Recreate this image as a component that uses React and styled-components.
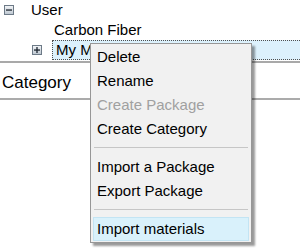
import React from 'react';
import styled, { createGlobalStyle } from 'styled-components';

const Global = createGlobalStyle`
html, body {
    margin: 0;
    padding: 0;
    background: #ffffff;
}
body {
    font-family: "Liberation Sans", Arial, sans-serif;
    color: #000;
}
`

//Screen
const Screen = styled.div`
position: relative;
width: 300px;
height: 250px;
overflow: hidden;
background: #ffffff;
`

//Tree
const Tree = styled.div`
display: flex;
flex-direction: column;
`

const Row = styled.div`
display: flex;
align-items: center;
height: 20px;
padding-left: ${props => props.indent}px;
font-size: 15px;
`

const Toggle = styled.svg`
flex: none;
width: 10px;
height: 10px;
margin-right: ${props => props.gap}px;
`

const Spacer = styled.div`
flex: none;
width: 10px;
margin-right: ${props => props.gap}px;
`

const Label = styled.div`
height: 18px;
line-height: 18px;
padding: 0 3px;
white-space: nowrap;
border: 1px solid transparent;
${props => props.selected && `
    flex: 1;
    margin-right: -6px;
    background: #dcf1fc;
    border: 1px dotted #505050;
`}
`

//Splitter
const Splitter = styled.div`
height: 1px;
border-top: 2px solid #a9a9a9;
margin-top: 1px;
`

//Category header
const Section = styled.div`
display: flex;
align-items: center;
height: 31px;
padding: 3px 2px 0;
font-size: 17px;
border-bottom: 2px solid #ababab;
`

//Context menu
const Menu = styled.div`
position: absolute;
left: 90px;
top: 43px;
width: 160px;
padding: 1px 0 1px;
background: #f1f1f1;
border: 1px solid #979797;
box-shadow: 3px 3px 2px rgba(0, 0, 0, 0.4);
`

const Item = styled.div`
height: 22px;
line-height: 22px;
margin: 0 2px;
padding: 0 3px;
font-size: 15px;
white-space: nowrap;
color: ${props => props.disabled ? '#a0a0a0' : '#000'};
border: 1px solid ${props => props.active ? '#c3e4f3' : 'transparent'};
background: ${props => props.active ? '#d9f1fb' : 'transparent'};
`

const Separator = styled.div`
height: 1px;
margin: 6px 3px 7px;
background: #c6c6c6;
`

function Expander({ open, gap }) {
    return (
        <Toggle gap={gap} viewBox="0 0 10 10">
            <defs>
                <linearGradient id={open ? 'gm' : 'gp'} x1="0" y1="0" x2="0" y2="1">
                    <stop offset="0" stopColor="#f4f6f8" />
                    <stop offset="1" stopColor="#bcc6d0" />
                </linearGradient>
            </defs>
            <rect x="0.5" y="0.5" width="9" height="9" fill={`url(#${open ? 'gm' : 'gp'})`} stroke="#6d7a87" />
            <rect x="2" y="4.4" width="6" height="1.3" fill="#1d2530" />
            {!open && <rect x="4.35" y="2" width="1.3" height="6" fill="#1d2530" />}
        </Toggle>
    );
}

const items = [
    { text: 'Delete' },
    { text: 'Rename' },
    { text: 'Create Package', disabled: true },
    { text: 'Create Category' },
    { sep: true },
    { text: 'Import a Package' },
    { text: 'Export Package' },
    { sep: true },
    { text: 'Import materials', active: true },
];

export default function App() {
    return (
        <Screen>
            <Global />
            <Tree>
                <Row indent={4}>
                    <Expander open gap={13} />
                    <Label>User</Label>
                </Row>
                <Row indent={32}>
                    <Spacer gap={8} />
                    <Label>Carbon Fiber</Label>
                </Row>
                <Row indent={32}>
                    <Expander gap={10} />
                    <Label selected>My Materials</Label>
                </Row>
            </Tree>
            <Splitter />
            <Section>Category</Section>
            <Menu>
                {items.map((it, i) => it.sep
                    ? <Separator key={i} />
                    : <Item key={i} disabled={it.disabled} active={it.active}>{it.text}</Item>
                )}
            </Menu>
        </Screen>
    );
}
